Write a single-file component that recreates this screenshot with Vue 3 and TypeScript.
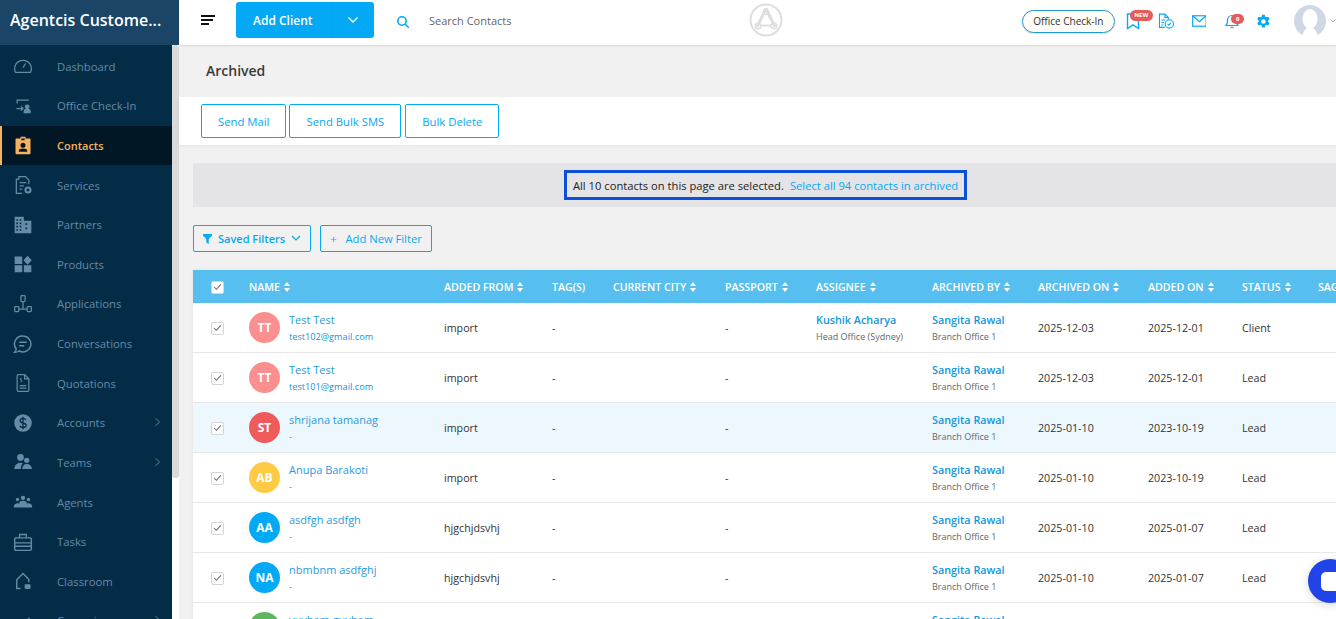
<template>
  <div class="app">
    <aside class="sidebar">
      <div class="brand">Agentcis Custome...</div>
      <div class="side-body">
        <nav class="menu">
          <a v-for="item in menu" :key="item.label" class="menu-item" :class="{ active: item.active }">
            <svg class="menu-icon" viewBox="0 0 24 24" fill="none" stroke="currentColor" stroke-width="1.5" v-html="item.icon"></svg>
            <span class="menu-label">{{ item.label }}</span>
            <svg v-if="item.arrow" class="menu-arrow" viewBox="0 0 8 12" fill="none" stroke="currentColor" stroke-width="1.1">
              <path d="M1.5 1.5 6.5 6l-5 4.5" />
            </svg>
          </a>
        </nav>
        <div class="side-scroll"><div class="side-thumb"></div></div>
      </div>
    </aside>

    <div class="main">
      <header class="topbar">
        <button class="burger" aria-label="menu">
          <span class="b1"></span><span class="b2"></span><span class="b3"></span>
        </button>
        <div class="add-client">
          <span class="add-text">Add Client</span>
          <span class="add-caret">
            <svg width="12" height="8" viewBox="0 0 12 8" fill="none" stroke="#fff" stroke-width="1.4"><path d="M1.5 1.5 6 6l4.5-4.5" /></svg>
          </span>
        </div>
        <svg class="search-icon" width="14" height="14" viewBox="0 0 14 14" fill="none" stroke="#03a9f4" stroke-width="1.6">
          <circle cx="6" cy="6" r="4.2" /><path d="m9.2 9.2 3.6 3.6" />
        </svg>
        <span class="search-text">Search Contacts</span>
        <div class="logo-wrap">
          <svg width="34" height="34" viewBox="0 0 34 34" fill="none" stroke="#dedede">
            <circle cx="17" cy="17" r="15.5" stroke-width="2" />
            <path d="M17 5.5 8 24M17 5.5 26 24" stroke-width="3" />
            <path d="M11 22.5h12" stroke-width="2" />
            <circle cx="17" cy="9" r="2.6" stroke-width="1.4" />
            <circle cx="9" cy="23" r="2.8" stroke-width="1.4" />
            <circle cx="25" cy="23" r="2.8" stroke-width="1.4" />
          </svg>
        </div>
        <div class="top-right">
          <span class="checkin-pill">Office Check-In</span>
          <span class="icon-box new-box">
            <svg width="14" height="17" viewBox="0 0 14 17" fill="none" stroke="#03a9f4" stroke-width="1.4"><path d="M1.5 1h11v14.5L7 11.8 1.5 15.500z" /></svg>
            <span class="new-badge">NEW</span>
          </span>
          <svg class="doc-check" width="17" height="18" viewBox="0 0 17 17" fill="none" stroke="#03a9f4" stroke-width="1.1">
            <path d="M7 15H1.500V1.500H7l3.500 3.500v2" /><path d="M7 1.500V5h3.500M3.500 7.500h4M3.500 10h2.500M3.500 12.500h2" />
            <circle cx="11.500" cy="11.500" r="4.200" /><path d="m9.700 11.500 1.300 1.300 2.200-2.300" />
          </svg>
          <svg class="mail" width="15" height="12" viewBox="0 0 15 12" fill="none" stroke="#03a9f4" stroke-width="1.2">
            <rect x=".7" y=".7" width="13.600" height="10.600" /><path d="m.7.700 6.800 6 6.800-6" />
          </svg>
          <span class="icon-box bell-box">
            <svg width="14" height="16" viewBox="0 0 14 16" fill="none" stroke="#03a9f4" stroke-width="1.2">
              <path d="M1 12.500c1.500-1.500 1.500-3 1.500-5C2.500 4.500 4.500 2.500 7 2.500s4.500 2 4.500 5c0 2 0 3.500 1.500 5z" /><path d="M5.500 14.500h3" />
            </svg>
            <span class="bell-badge">6</span>
          </span>
          <svg class="gear" width="15" height="15" viewBox="0 0 24 24" fill="#03a9f4">
            <path fill-rule="evenodd" d="M14.200 1h-4.400l-.6 3.100a8.500 8.500 0 0 0-2 1.200l-3-1-2.200 3.800 2.400 2.100a8.500 8.500 0 0 0 0 2.300l-2.400 2.100 2.200 3.800 3-1a8.500 8.500 0 0 0 2 1.200l.6 3.100h4.400l.6-3.100a8.500 8.500 0 0 0 2-1.200l3 1 2.200-3.800-2.400-2.100a8.500 8.500 0 0 0 0-2.300L22.200 8.100 20 4.300l-3 1a8.500 8.500 0 0 0-2-1.200zM12 8.200a3.800 3.800 0 1 1 0 7.600 3.800 3.800 0 0 1 0-7.600z" />
          </svg>
          <span class="avatar-top">
            <svg width="32" height="32" viewBox="0 0 32 32">
              <circle cx="16" cy="16" r="16" fill="#d0d7e6" />
              <ellipse cx="16" cy="14" rx="7.500" ry="10" fill="#fff" />
              <path d="M8 32c1-5 3-8 5-9h6c2 1 4 4 5 9z" fill="#fff" />
            </svg>
          </span>
          <svg class="avatar-caret" width="6" height="4" viewBox="0 0 6 4" fill="none" stroke="#aaa"><path d="m.5.500 2.500 2.500L5.500.500" /></svg>
        </div>
      </header>

      <div class="page-title">Archived</div>

      <div class="actions">
        <button class="action-btn">Send Mail</button>
        <button class="action-btn">Send Bulk SMS</button>
        <button class="action-btn">Bulk Delete</button>
      </div>

      <div class="content">
        <div class="select-bar">
          <div class="select-box">
            <span>All 10 contacts on this page are selected.</span>
            <a class="select-all">Select all 94 contacts in archived</a>
          </div>
        </div>

        <div class="filters">
          <button class="filter-btn saved">
            <svg width="9" height="10" viewBox="0 0 9 10" fill="#03a9f4"><path d="M0 0h9v1.500L5.700 5v5L3.300 8.500V5L0 1.500z" /></svg>
            <b>Saved Filters</b>
            <svg width="10" height="7" viewBox="0 0 10 7" fill="none" stroke="#03a9f4" stroke-width="1.1"><path d="m1 1 4 4 4-4" /></svg>
          </button>
          <button class="filter-btn add"><i>+</i> Add New Filter</button>
        </div>

        <div class="table">
          <div class="row head">
            <div class="cell-check"><span class="check head-check"><svg viewBox="0 0 12 10" fill="none" stroke="#6b6b6b" stroke-width="1.4"><path d="m1.500 5 3 3 6-6.500" /></svg></span></div>
            <div v-for="h in columns" :key="h" class="th">
              {{ h }}
              <svg v-if="h !== 'TAG(S)'" class="sort" width="6" height="10" viewBox="0 0 6 10" fill="#fff"><path d="M3 0 6 4H0zM3 10 0 6h6z" /></svg>
            </div>
          </div>
          <div v-for="c in contacts" :key="c.email + c.name" class="row" :class="{ hl: c.highlight }">
            <div class="cell-check"><span class="check"><svg viewBox="0 0 12 10" fill="none" stroke="#6b6b6b" stroke-width="1.4"><path d="m1.500 5 3 3 6-6.500" /></svg></span></div>
            <div class="name-cell">
              <span class="avatar" :style="{ background: c.color }">{{ c.initials }}</span>
              <div class="name-text">
                <a class="link">{{ c.name }}</a>
                <a class="email">{{ c.email }}</a>
              </div>
            </div>
            <div class="td">{{ c.from }}</div>
            <div class="td">-</div>
            <div class="td"></div>
            <div class="td">-</div>
            <div class="td stack">
              <template v-if="c.assignee">
                <a class="link strong">{{ c.assignee }}</a>
                <span class="sub">Head Office (Sydney)</span>
              </template>
            </div>
            <div class="td stack">
              <a class="link strong">Sangita Rawal</a>
              <span class="sub">Branch Office 1</span>
            </div>
            <div class="td">{{ c.archived }}</div>
            <div class="td">{{ c.added }}</div>
            <div class="td">{{ c.status }}</div>
            <div class="td"></div>
          </div>
        </div>
      </div>
    </div>

    <div class="chat-bubble"><span class="chat-inner"></span></div>
  </div>
</template>

<script setup lang="ts">
interface MenuItem {
  label: string
  icon: string
  active?: boolean
  arrow?: boolean
}

interface Contact {
  initials: string
  color: string
  name: string
  email: string
  from: string
  assignee?: string
  archived: string
  added: string
  status: string
  highlight?: boolean
}

const menu: MenuItem[] = [
  { label: 'Dashboard', icon: '<path d="M3 19.500a10 10 0 1 1 18 0z"/><path d="m12 14 3-5"/>' },
  { label: 'Office Check-In', icon: '<path d="M5 9V5h14M4 15h8m-2.500-2.500L12 15l-2.500 2.500"/><circle cx="17" cy="13" r="2.200" fill="currentColor"/><path d="M13.500 20v-1.500a2.500 2.500 0 0 1 2.500-2.500h2a2.500 2.500 0 0 1 2.500 2.500V20z" fill="currentColor"/>' },
  { label: 'Contacts', active: true, icon: '<path fill-rule="evenodd" stroke="none" fill="currentColor" d="M4 3h5V1h6v2h5a1 1 0 0 1 1 1v17a1 1 0 0 1-1 1H4a1 1 0 0 1-1-1V4a1 1 0 0 1 1-1zm6 0v2h4V3zm2 5a3 3 0 1 0 0 6 3 3 0 0 0 0-6zM7 19h10v-1.500c0-1.500-2-2.500-5-2.500s-5 1-5 2.500z"/>' },
  { label: 'Services', icon: '<path d="M11 22H4V5h3V2h8l4 4v5"/><path d="M8 9h8M8 13h5M8 17h3"/><circle cx="18" cy="18" r="3" stroke-width="2.500"/>' },
  { label: 'Partners', icon: '<path fill="currentColor" stroke="none" fill-rule="evenodd" d="M2 2h11v5h9v15H2zm2 3v2h2V5zm4 0v2h2V5zM4 9v2h2V9zm4 0v2h2V9zm-4 4v2h2v-2zm4 0v2h2v-2zm-4 4v2h2v-2zm4 0v2h2v-2zm7-7v2h2v-2zm0 5v2h2v-2z"/>' },
  { label: 'Products', icon: '<path fill="currentColor" stroke="none" d="M2 3h9v9H2zM2 13.500h9V22H2zM13 13.500h9V22h-9zM17.500 2 22.500 7.500 17.500 13 12.500 7.500z"/>' },
  { label: 'Applications', icon: '<rect x="9.500" y="2" width="5" height="7" rx="1"/><rect x="2" y="15" width="5" height="6" rx="1"/><rect x="17" y="15" width="5" height="6" rx="1"/><path d="M12 9v9M7 18h10"/>' },
  { label: 'Conversations', icon: '<path d="M12 2.500a9.500 9.500 0 1 1-4.500 17.900C6 21.500 4 22 2 22c1-1 1.700-2.500 1.800-4.200A9.500 9.500 0 0 1 12 2.500z" stroke-width="1.800"/><path d="M7.500 10h9M7.500 14h6" stroke-width="1.800"/>' },
  { label: 'Quotations', icon: '<path d="M5 3.500A1.500 1.500 0 0 1 6.500 2H14l5 5v13.500a1.500 1.500 0 0 1-1.500 1.500h-11A1.500 1.500 0 0 1 5 20.500z"/><path d="M14 2v5h5M8 15h8M8 18h8"/><path d="M10.500 6.500H9v2h1.500v2H9" stroke-width="1"/>' },
  { label: 'Accounts', arrow: true, icon: '<circle cx="12" cy="12" r="10.500" fill="currentColor" stroke="none"/><path d="M15.500 8.500c-.5-1.200-2-2-3.500-2-2 0-3.500 1-3.500 2.700 0 3.600 7.200 2 7.200 5.500 0 1.700-1.700 2.800-3.700 2.800-1.700 0-3.200-.8-3.800-2.200M12 4.500v15" stroke="#042c47" stroke-width="1.600"/>' },
  { label: 'Teams', arrow: true, icon: '<g fill="currentColor" stroke="none"><circle cx="9" cy="6.500" r="4"/><circle cx="16.500" cy="10" r="3.200"/><path d="M1.500 20.500c.3-4.500 3.500-7.500 7.500-7.500 1 0 2 .2 2.800.6-1.300 1.400-2.300 3.500-2.500 6.900zM11 20.500c.2-3.700 2.500-6 5.500-6s6 2.300 6.300 6z"/></g>' },
  { label: 'Agents', icon: '<g fill="currentColor" stroke="none"><circle cx="12" cy="7" r="2.600"/><circle cx="5.500" cy="9" r="2"/><circle cx="18.500" cy="9" r="2"/><path d="M1 18.500v-1c0-2.500 2-4 4.500-4 1 0 1.500.2 2 .5v-1c0-1.500 2-2.500 4.500-2.500s4.500 1 4.500 2.500v1c.5-.3 1-.5 2-.5 2.500 0 4.500 1.500 4.500 4v1z"/></g>' },
  { label: 'Tasks', icon: '<rect x="2" y="7" width="20" height="15" rx="1.500" stroke-width="1.700"/><path d="M8 7V3h8v4M2 13h20M2 17h20" stroke-width="1.700"/>' },
  { label: 'Classroom', icon: '<path d="M9 21H4.500V10.500L12 3l7 7v3.500" stroke-width="1.700"/><rect x="14" y="16" width="7" height="5.500" rx="1" fill="currentColor" stroke="none"/>' },
  { label: 'Campaigns', arrow: true, icon: '<path d="M3 22 20 8" />' },
]

const columns = [
  'NAME',
  'ADDED FROM',
  'TAG(S)',
  'CURRENT CITY',
  'PASSPORT',
  'ASSIGNEE',
  'ARCHIVED BY',
  'ARCHIVED ON',
  'ADDED ON',
  'STATUS',
  'SAG',
]

const contacts: Contact[] = [
  { initials: 'TT', color: '#f98f8f', name: 'Test Test', email: 'test102@gmail.com', from: 'import', assignee: 'Kushik Acharya', archived: '2025-12-03', added: '2025-12-01', status: 'Client' },
  { initials: 'TT', color: '#f98f8f', name: 'Test Test', email: 'test101@gmail.com', from: 'import', archived: '2025-12-03', added: '2025-12-01', status: 'Lead' },
  { initials: 'ST', color: '#ef5a5a', name: 'shrijana tamanag', email: '-', from: 'import', archived: '2025-01-10', added: '2023-10-19', status: 'Lead', highlight: true },
  { initials: 'AB', color: '#ffca45', name: 'Anupa Barakoti', email: '-', from: 'import', archived: '2025-01-10', added: '2023-10-19', status: 'Lead' },
  { initials: 'AA', color: '#03a9f4', name: 'asdfgh asdfgh', email: '-', from: 'hjgchjdsvhj', archived: '2025-01-10', added: '2025-01-07', status: 'Lead' },
  { initials: 'NA', color: '#03a9f4', name: 'nbmbnm asdfghj', email: '-', from: 'hjgchjdsvhj', archived: '2025-01-10', added: '2025-01-07', status: 'Lead' },
  { initials: 'YY', color: '#5cb85c', name: 'yuybam guybam', email: '-', from: 'hjgchjdsvhj', archived: '2025-01-10', added: '2025-01-07', status: 'Lead' },
]
</script>

<style>
html,
body {
  margin: 0;
  height: 100%;
  overflow: hidden;
}
</style>

<style scoped>
.app {
  display: flex;
  height: 619px;
  width: 1336px;
  overflow: hidden;
  font-family: 'Open Sans', 'Noto Sans', sans-serif;
  font-size: 11px;
  color: #333;
  position: relative;
  background: #f1f1f1;
}

.sidebar {
  width: 179px;
  flex-shrink: 0;
  display: flex;
  flex-direction: column;
  background: #042c47;
}

.brand {
  height: 45px;
  background: #1a4566;
  color: #fff;
  font-size: 16px;
  font-weight: 600;
  line-height: 41px;
  padding-left: 10px;
  white-space: nowrap;
}

.side-body {
  flex: 1;
  display: flex;
  min-height: 0;
}

.menu {
  width: 172px;
  display: flex;
  flex-direction: column;
  padding-top: 1.5px;
}

.menu-item {
  height: 39.62px;
  flex-shrink: 0;
  display: flex;
  align-items: center;
  color: #668ba6;
  font-size: 11.3px;
  box-sizing: border-box;
  padding-left: 13px;
  position: relative;
}

.menu-item.active {
  background: #021725;
  color: #f8b25f;
  font-size: 11px;
  font-weight: 600;
  border-left: 2px solid #f8b25f;
  padding-left: 11px;
}

.menu-icon {
  width: 20px;
  height: 20px;
  margin-right: 24px;
  flex-shrink: 0;
}

.menu-arrow {
  width: 7px;
  height: 10px;
  position: absolute;
  right: 11px;
  top: 14px;
}

.side-scroll {
  width: 7px;
  background: #fff;
}

.side-thumb {
  height: 433px;
  background: #d9d9d9;
  border-radius: 3px;
}

.main {
  flex: 1;
  min-width: 0;
  display: flex;
  flex-direction: column;
}

.topbar {
  height: 45px;
  box-sizing: border-box;
  padding-bottom: 5px;
  background: #fff;
  display: flex;
  align-items: center;
  flex-shrink: 0;
  box-shadow: 0 1px 2px rgba(0, 0, 0, 0.1);
  position: relative;
  z-index: 1;
}

.burger {
  border: none;
  background: none;
  padding: 0;
  margin-left: 22px;
  width: 14px;
  display: flex;
  flex-direction: column;
  gap: 2px;
}

.burger span {
  height: 2px;
  background: #111;
  display: block;
}

.b1 { width: 14px; }
.b2 { width: 12px; }
.b3 { width: 8px; }

.add-client {
  margin-left: 21px;
  width: 138px;
  height: 36px;
  background: #03a9f4;
  border-radius: 3px;
  color: #fff;
  display: flex;
  align-items: center;
  font-size: 12px;
  font-weight: 600;
}

.add-text {
  width: 95px;
  padding-left: 17px;
  box-sizing: border-box;
}

.add-caret {
  flex: 1;
  display: flex;
  justify-content: center;
  height: 100%;
  align-items: center;
  border-left: 1px solid #09a3e8;
}

.search-icon {
  margin-left: 22px;
  margin-top: 3px;
}

.search-text {
  margin-left: 19px;
  color: #666;
  font-size: 11px;
}

.logo-wrap {
  position: absolute;
  left: 570px;
  top: 3px;
  display: flex;
}

.top-right {
  margin-left: auto;
  display: flex;
  align-items: center;
  position: relative;
  width: 314px;
  height: 42px;
  align-self: flex-start;
  flex-shrink: 0;
}

.checkin-pill {
  width: 92px;
  height: 21px;
  border: 1px solid #1d9ad6;
  border-radius: 12px;
  background: #fffdf5;
  color: #333;
  font-size: 10px;
  display: flex;
  align-items: center;
  justify-content: center;
  box-shadow: 0 1px 1px rgba(0, 0, 0, 0.12);
}

.icon-box {
  position: relative;
  display: flex;
}

.new-box { margin-left: 11px; }

.new-badge {
  position: absolute;
  left: 4px;
  top: -3px;
  width: 23px;
  height: 11px;
  border-radius: 6px;
  background: #e35d5d;
  color: #fff;
  font-size: 6px;
  font-weight: 700;
  line-height: 11px;
  text-align: center;
}

.doc-check { margin-left: 18px; }
.mail { margin-left: 17px; }
.bell-box { margin-left: 19px; }

.bell-badge {
  position: absolute;
  left: 6px;
  top: 1px;
  width: 13px;
  height: 10px;
  border-radius: 5px;
  background: #e35d5d;
  color: #fff;
  font-size: 6px;
  font-weight: 700;
  line-height: 10px;
  text-align: center;
}

.gear { margin-left: 17px; }

.avatar-top {
  margin-left: 23px;
  display: flex;
  width: 32px;
  height: 32px;
}

.avatar-caret { margin-left: 4px; }

.page-title {
  height: 52px;
  flex-shrink: 0;
  padding-left: 27px;
  font-size: 14px;
  font-weight: 600;
  color: #3a3a3a;
  line-height: 52px;
}

.actions {
  height: 48px;
  flex-shrink: 0;
  background: #fff;
  display: flex;
  align-items: center;
  gap: 3px;
  padding-left: 22px;
  box-shadow: 0 1px 2px rgba(0, 0, 0, 0.06);
}

.action-btn {
  height: 34px;
  padding: 0 16px;
  background: #fff;
  border: 1px solid #03a9f4;
  border-radius: 2px;
  color: #03a9f4;
  font-family: inherit;
  font-size: 11.3px;
  white-space: nowrap;
}

.action-btn:last-child {
  margin-left: 1px;
  padding: 0;
  width: 94px;
}

.content {
  flex: 1;
  padding: 18px 0 0 14px;
  min-height: 0;
}

.select-bar {
  height: 44px;
  background: #e4e4e6;
  display: flex;
  align-items: center;
  justify-content: center;
  padding-left: 2px;
}

.select-box {
  height: 30px;
  box-sizing: border-box;
  border: 3px solid #0a50d8;
  display: flex;
  align-items: center;
  gap: 6px;
  padding: 0 6px;
  font-size: 11.2px;
  color: #222;
  white-space: nowrap;
}

.select-all {
  color: #03a9f4;
}

.filters {
  display: flex;
  gap: 9px;
  margin-top: 18px;
}

.filter-btn {
  height: 27px;
  box-sizing: border-box;
  border: 1px solid #03a9f4;
  border-radius: 2px;
  background: none;
  color: #03a9f4;
  font-family: inherit;
  font-size: 11.2px;
  display: flex;
  align-items: center;
  gap: 6px;
  padding: 0 9px;
}

.filter-btn b {
  font-weight: 600;
  font-size: 11px;
}

.filter-btn i {
  font-style: normal;
  margin-right: 3px;
}

.table {
  margin-top: 18px;
  background: #fff;
  box-shadow: 0 0 3px rgba(0, 0, 0, 0.08);
}

.row {
  display: grid;
  grid-template-columns: 56px 195px 108px 61px 112px 91px 116px 106px 110px 94px 76px 60px;
  height: 50px;
  box-sizing: border-box;
  border-bottom: 1px solid #e8e8e8;
  align-items: center;
}

.row.hl { background: #ecf8fe; }

.row.head {
  height: 33px;
  background: #57bff0;
  border: none;
  color: #fff;
  font-weight: 600;
  font-size: 10.6px;
  white-space: nowrap;
  overflow: hidden;
}

.th {
  display: flex;
  align-items: center;
  gap: 4px;
}

.sort { flex-shrink: 0; }

.cell-check {
  display: flex;
  padding: 1px 0 0 18px;
}

.check {
  width: 11px;
  height: 11px;
  border: 1px solid #d5d5d5;
  border-radius: 2px;
  background: #fff;
  display: flex;
  align-items: center;
  justify-content: center;
}

.check svg {
  width: 9px;
  height: 8px;
}

.name-cell {
  display: flex;
  align-items: center;
  gap: 9px;
}

.avatar {
  width: 31px;
  height: 31px;
  border-radius: 50%;
  color: #fff;
  font-size: 12px;
  font-weight: 700;
  display: flex;
  align-items: center;
  justify-content: center;
  flex-shrink: 0;
}

.name-text {
  display: flex;
  flex-direction: column;
  gap: 4px;
  margin-top: 1px;
}

.link {
  color: #2a9bdc;
  font-size: 11px;
  line-height: 14px;
}

.link.strong {
  color: #1296db;
  font-size: 10.8px;
  font-weight: 600;
}

.email {
  color: #1296db;
  font-size: 9.2px;
  line-height: 12px;
}

.td {
  font-size: 10.7px;
  color: #333;
  white-space: nowrap;
}

.stack {
  display: flex;
  flex-direction: column;
  gap: 3px;
}

.sub {
  font-size: 9px;
  color: #666;
  line-height: 13px;
}

.chat-bubble {
  position: absolute;
  left: 1308px;
  top: 559px;
  width: 44px;
  height: 44px;
  border-radius: 50%;
  background: #2044e8;
  box-shadow: 0 2px 10px rgba(0, 0, 0, 0.15);
  display: flex;
  align-items: center;
  justify-content: center;
}

.chat-inner {
  width: 22px;
  height: 19px;
  background: #fff;
  border-radius: 5px;
  margin-left: 4px;
}
</style>
